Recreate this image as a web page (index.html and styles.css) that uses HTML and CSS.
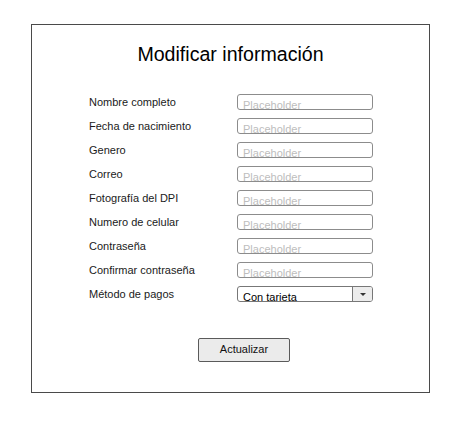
FILE: index.html
```html
<!DOCTYPE html>
<html lang="es">
<head>
<meta charset="utf-8">
<title>Modificar información</title>
<link rel="stylesheet" href="styles.css">
</head>
<body>
<div class="frame">
  <h1 class="title">Modificar información</h1>
  <div class="form">
    <div class="label">Nombre completo</div><div class="field"><span class="ph">Placeholder</span></div>
    <div class="label">Fecha de nacimiento</div><div class="field"><span class="ph">Placeholder</span></div>
    <div class="label">Genero</div><div class="field"><span class="ph">Placeholder</span></div>
    <div class="label">Correo</div><div class="field"><span class="ph">Placeholder</span></div>
    <div class="label">Fotografía del DPI</div><div class="field"><span class="ph">Placeholder</span></div>
    <div class="label">Numero de celular</div><div class="field"><span class="ph">Placeholder</span></div>
    <div class="label">Contraseña</div><div class="field"><span class="ph">Placeholder</span></div>
    <div class="label">Confirmar contraseña</div><div class="field"><span class="ph">Placeholder</span></div>
    <div class="label">Método de pagos</div>
    <div class="field select"><span class="val">Con tarjeta</span><span class="drop"><span class="arrow"></span></span></div>
  </div>
  <div class="actions">
    <div class="btn">Actualizar</div>
  </div>
</div>
</body>
</html>
```
FILE: styles.css
```css
* { box-sizing: border-box; }
html, body { margin: 0; padding: 0; background: #fff; }
body { font-family: "Liberation Sans", Arial, sans-serif; color: #111; }

.frame {
  margin: 24px 0 0 31px;
  width: 399px;
  height: 369px;
  border: 1px solid #4a4a4a;
  padding-top: 18px;
}

.title {
  margin: 0;
  font-size: 19.6px;
  font-weight: normal;
  line-height: 23px;
  text-align: center;
  color: #000;
}

.form {
  margin-top: 24px;
  padding-left: 57px;
  display: grid;
  grid-template-columns: 148px 136px;
  grid-auto-rows: 24px;
  align-items: center;
}

.label {
  font-size: 11px;
  line-height: 13px;
  padding-top: 1px;
  color: #1a1a1a;
}

.field {
  height: 16px;
  border: 1px solid #8c8c8c;
  border-radius: 3px;
  padding: 4px 0 0 5px;
  overflow: hidden;
  font-size: 11px;
  line-height: 13px;
  white-space: nowrap;
}

.ph { color: #bdbdbd; }

.select {
  display: flex;
  padding: 0;
  border-color: #777;
}
.select .val {
  flex: 1;
  padding: 4px 0 0 5px;
  color: #000;
}
.select .drop {
  width: 20px;
  border-left: 1px solid #777;
  background: #ececec;
  display: flex;
  align-items: center;
  justify-content: center;
}
.arrow {
  width: 0;
  height: 0;
  border-left: 3px solid transparent;
  border-right: 3px solid transparent;
  border-top: 3px solid #333;
}

.actions {
  margin-top: 32px;
  padding-left: 166px;
  display: flex;
}

.btn {
  width: 92px;
  height: 24px;
  border: 1px solid #5a5a5a;
  border-radius: 2px;
  background: #ebebeb;
  font-size: 11px;
  line-height: 21px;
  text-align: center;
  color: #111;
}
```
